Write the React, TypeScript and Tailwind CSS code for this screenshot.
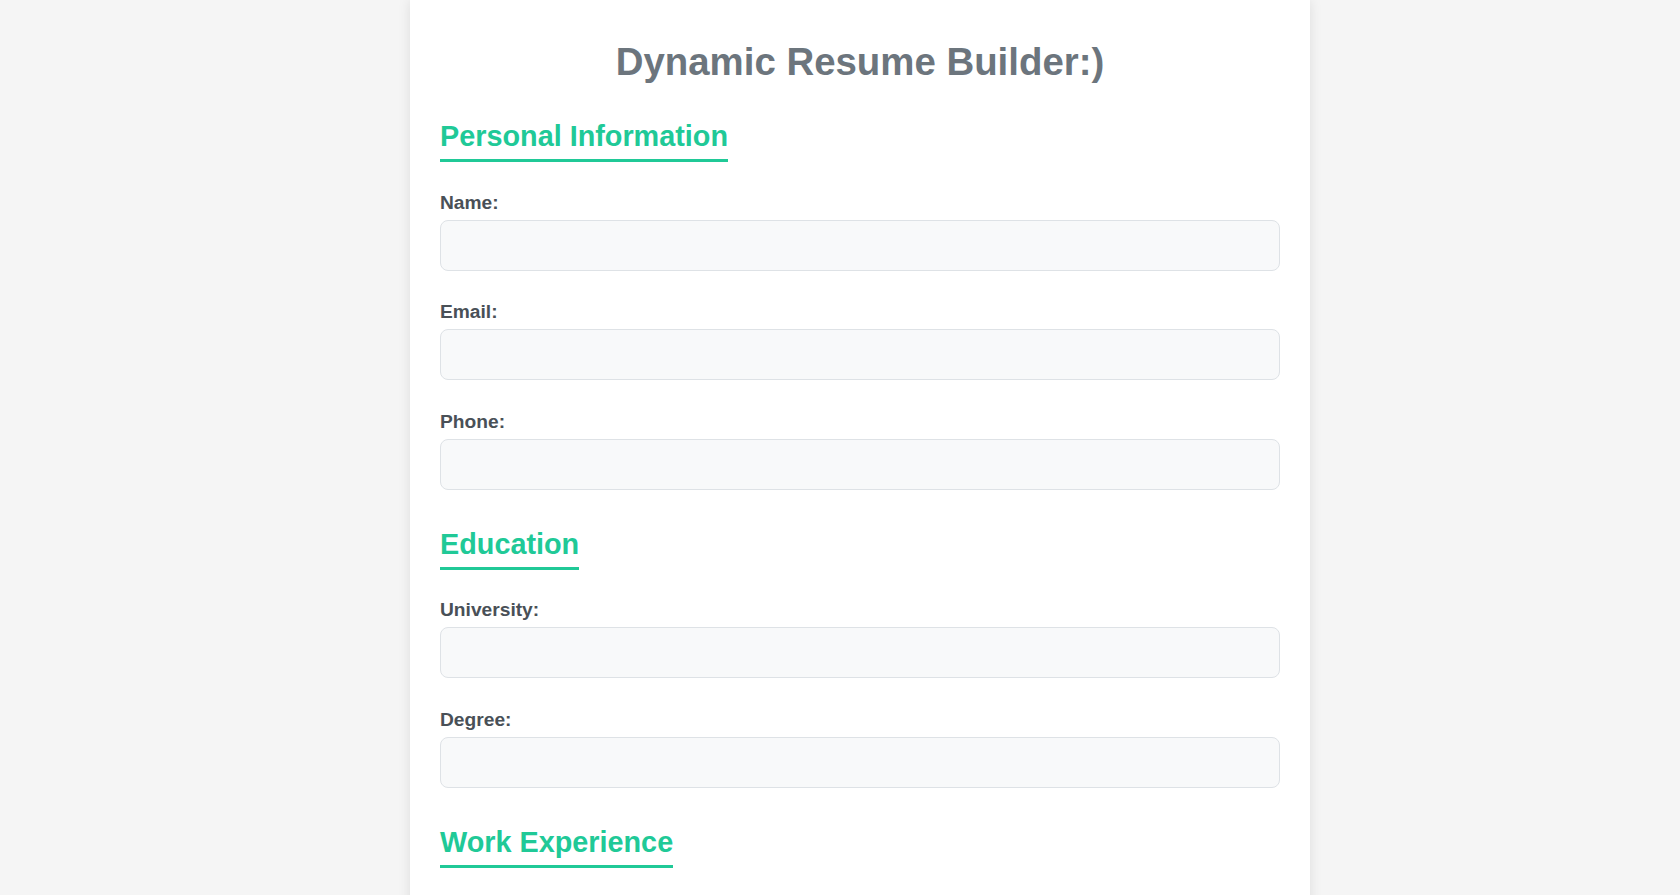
import React from "react";

function Field({ label, type = "text" }: { label: string; type?: string }) {
  return (
    <div className="mb-[30.7px]">
      <label className="block h-[22px] mb-[6px] text-[19.2px] leading-[22px] font-bold text-[#495057]">
        {label}
      </label>
      <input
        type={type}
        className="block w-full h-[51px] px-[12px] rounded-[8px] border border-[#dee2e6] bg-[#f8f9fa] text-[19.2px] text-[#495057] outline-none"
      />
    </div>
  );
}

function Section({ title, children }: { title: string; children: React.ReactNode }) {
  return (
    <div className="pb-[7px]">
      <h2 className="inline-block h-[42px] pb-[6px] mb-[29.6px] border-b-[3px] border-[#20c997] text-[28.8px] leading-[33px] font-bold text-[#20c997]">
        {title}
      </h2>
      {children}
    </div>
  );
}

export default function App() {
  return (
    <div
      className="min-h-screen bg-[#f5f5f5] overflow-hidden"
      style={{ fontFamily: '"Liberation Sans", Arial, sans-serif' }}
    >
      <div className="ml-[410px] w-[900px] bg-white px-[30px] pt-[40px] pb-[30px] shadow-[0_0_12px_rgba(0,0,0,0.1)]">
        <h1 className="h-[44px] mb-[36px] text-center text-[38.4px] leading-[44px] font-bold text-[#6c757d]">
          Dynamic Resume Builder:)
        </h1>
        <Section title="Personal Information">
          <Field label="Name:" />
          <Field label="Email:" type="email" />
          <Field label="Phone:" type="tel" />
        </Section>
        <Section title="Education">
          <Field label="University:" />
          <Field label="Degree:" />
        </Section>
        <Section title="Work Experience">
          <Field label="Company:" />
          <Field label="Position:" />
        </Section>
      </div>
    </div>
  );
}
